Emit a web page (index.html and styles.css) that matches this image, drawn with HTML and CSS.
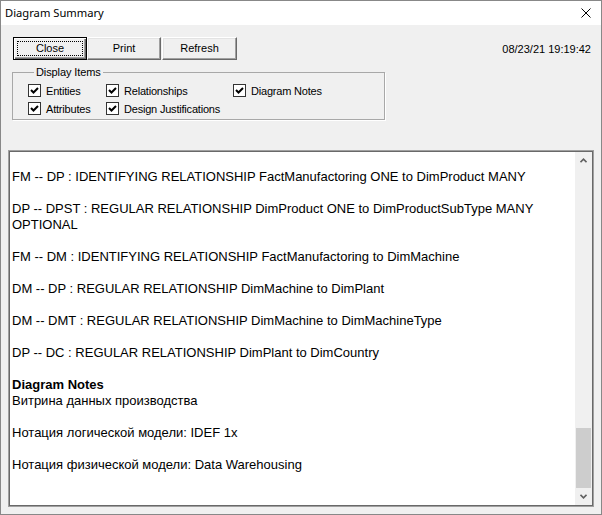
FILE: index.html
```html
<!DOCTYPE html>
<html>
<head>
<meta charset="utf-8">
<title>Diagram Summary</title>
<link rel="stylesheet" href="styles.css">
</head>
<body>
<div class="window">
  <div class="titlebar">
    <span class="title">Diagram Summary</span>
    <svg class="close-x" width="10" height="10" viewBox="0 0 10 10"><path d="M0.5 0.5 L9.5 9.5 M9.5 0.5 L0.5 9.5" stroke="#000" stroke-width="1" fill="none"/></svg>
  </div>
  <div class="client">
    <div class="toolbar">
      <div class="buttons">
        <button class="btn btn-default">Close</button>
        <button class="btn">Print</button>
        <button class="btn btn-refresh">Refresh</button>
      </div>
      <span class="timestamp">08/23/21 19:19:42</span>
    </div>
    <fieldset class="group">
      <legend>Display Items</legend>
      <div class="checks">
        <label class="check"><span class="box"><svg width="11" height="11" viewBox="0 0 11 11"><polyline points="2,5 4.5,7.5 9,3" stroke="#000" stroke-width="2" fill="none"/></svg></span>Entities</label>
        <label class="check"><span class="box"><svg width="11" height="11" viewBox="0 0 11 11"><polyline points="2,5 4.5,7.5 9,3" stroke="#000" stroke-width="2" fill="none"/></svg></span>Relationships</label>
        <label class="check"><span class="box"><svg width="11" height="11" viewBox="0 0 11 11"><polyline points="2,5 4.5,7.5 9,3" stroke="#000" stroke-width="2" fill="none"/></svg></span>Diagram Notes</label>
        <label class="check"><span class="box"><svg width="11" height="11" viewBox="0 0 11 11"><polyline points="2,5 4.5,7.5 9,3" stroke="#000" stroke-width="2" fill="none"/></svg></span>Attributes</label>
        <label class="check"><span class="box"><svg width="11" height="11" viewBox="0 0 11 11"><polyline points="2,5 4.5,7.5 9,3" stroke="#000" stroke-width="2" fill="none"/></svg></span>Design Justifications</label>
      </div>
    </fieldset>
    <div class="report">
      <div class="report-text">
        <p>FM -- DP : IDENTIFYING RELATIONSHIP FactManufactoring ONE to DimProduct MANY</p>
        <p>DP -- DPST : REGULAR RELATIONSHIP DimProduct ONE to DimProductSubType MANY OPTIONAL</p>
        <p>FM -- DM : IDENTIFYING RELATIONSHIP FactManufactoring to DimMachine</p>
        <p>DM -- DP : REGULAR RELATIONSHIP DimMachine to DimPlant</p>
        <p>DM -- DMT : REGULAR RELATIONSHIP DimMachine to DimMachineType</p>
        <p>DP -- DC : REGULAR RELATIONSHIP DimPlant to DimCountry</p>
        <p><strong>Diagram Notes</strong><br>Витрина данных производства</p>
        <p>Нотация логической модели: IDEF 1x</p>
        <p>Нотация физической модели: Data Warehousing</p>
      </div>
      <div class="scrollbar">
        <div class="sb-btn"><svg width="7" height="5" viewBox="0 0 7 5"><polyline points="0.5,4.2 3.5,1.2 6.5,4.2" stroke="#606060" stroke-width="1.6" fill="none"/></svg></div>
        <div class="sb-track"><div class="sb-thumb"></div></div>
        <div class="sb-btn"><svg width="7" height="5" viewBox="0 0 7 5"><polyline points="0.5,0.8 3.5,3.8 6.5,0.8" stroke="#606060" stroke-width="1.6" fill="none"/></svg></div>
      </div>
    </div>
  </div>
</div>
</body>
</html>
```
FILE: styles.css
```css
* { box-sizing: border-box; }
body { margin: 0; background: #fff; }

.window {
  width: 602px;
  height: 515px;
  border: 1px solid #888;
  display: flex;
  flex-direction: column;
  background: #f0f0f0;
}

.titlebar {
  height: 24px;
  flex: none;
  background: #fff;
  display: flex;
  align-items: center;
  justify-content: space-between;
  padding: 0 10px 0 4px;
}
.title {
  font: 11.2px "Noto Sans", "Open Sans", sans-serif;
  color: #000;
  position: relative;
  top: -1px;
}
.close-x { display: block; }

.client {
  flex: 1;
  display: flex;
  flex-direction: column;
  min-height: 0;
}

.toolbar {
  margin: 12px 10px 0 12px;
  height: 23px;
  display: flex;
  align-items: center;
  justify-content: space-between;
}
.buttons { display: flex; }
.btn {
  width: 74px;
  height: 23px;
  margin: 0;
  padding: 0 0 1px;
  font: 11px "Liberation Sans", Arial, sans-serif;
  color: #000;
  background: #f0f0f0;
  border: 1px solid;
  border-color: #fff #696969 #696969 #fff;
  box-shadow: inset -1px -1px 0 #a0a0a0, inset 1px 1px 0 #e3e3e3;
}
.btn-refresh { margin-left: 1px; width: 75px; }
.btn-default {
  border: 1px solid #000;
  box-shadow: inset 1px 1px 0 #fff, inset -1px -1px 0 #696969, inset -2px -2px 0 #a0a0a0;
  outline: 1px dotted #000;
  outline-offset: -5px;
}
.timestamp {
  font: 11px "Liberation Sans", Arial, sans-serif;
  color: #000;
}

.group {
  margin: 6px 0 0 11px;
  width: 373px;
  padding: 5px 0 4px 15px;
  border: 1px solid #a8a8a8;
  box-shadow: 1px 1px 0 #fff;
  min-width: 0;
}
.group legend {
  margin-left: 6px;
  padding: 0 2px;
  font: 11px "Liberation Sans", Arial, sans-serif;
  letter-spacing: -0.1px;
  line-height: 13px;
  color: #000;
}
.checks {
  display: grid;
  grid-template-columns: 78px 127px auto;
  row-gap: 5px;
}
.check {
  display: flex;
  align-items: center;
  gap: 5px;
  height: 13px;
  font: 11px "Liberation Sans", Arial, sans-serif;
  letter-spacing: -0.2px;
  color: #000;
  white-space: nowrap;
}
.box {
  width: 13px;
  height: 13px;
  flex: none;
  border: 1px solid #333;
  background: #fff;
  display: block;
}
.box svg { display: block; }

.report {
  flex: 1;
  min-height: 0;
  margin: 30px 7px 7px 7px;
  border: 1px solid #a0a0a0;
  box-shadow: inset 0 0 0 1px #696969;
  padding: 1px;
  background: #fff;
  display: flex;
}
.report-text {
  flex: 1;
  overflow: hidden;
  padding: 17px 0 0 2px;
  font: 13px "Liberation Sans", Arial, sans-serif;
  line-height: 16px;
  color: #000;
}
.report-text p { margin: 0 0 16px; }

.scrollbar {
  width: 17px;
  flex: none;
  background: #f0f0f0;
  display: flex;
  flex-direction: column;
}
.sb-btn {
  height: 17px;
  flex: none;
  display: flex;
  align-items: center;
  justify-content: center;
}
.sb-btn svg { display: block; }
.sb-track {
  flex: 1;
  display: flex;
  flex-direction: column;
  justify-content: flex-end;
}
.sb-thumb {
  height: 60px;
  margin: 0 1px;
  background: #cdcdcd;
}
```
